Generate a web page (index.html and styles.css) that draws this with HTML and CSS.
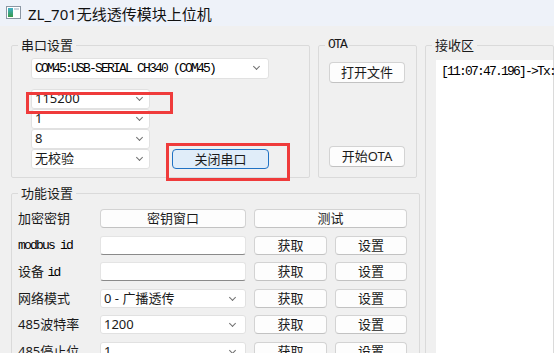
FILE: index.html
```html
<!DOCTYPE html>
<html lang="zh-CN">
<head>
  <meta charset="UTF-8">
  <title>ZL_701无线透传模块上位机</title>
  <link rel="stylesheet" href="styles.css">
</head>
<body>
  <div class="titlebar">
    <svg class="appicon" width="15" height="13" viewBox="0 0 15 13">
      <defs>
        <linearGradient id="g" x1="0" y1="0" x2="0" y2="1">
          <stop offset="0" stop-color="#3fb0c8"/>
          <stop offset="1" stop-color="#3a9a4a"/>
        </linearGradient>
      </defs>
      <rect x="0.5" y="0.5" width="14" height="12" fill="#fff" stroke="#8a96a3"/>
      <rect x="2" y="2" width="5" height="9" fill="url(#g)"/>
      <rect x="8" y="2" width="5" height="2" fill="#c9d3dd"/>
    </svg>
    <span class="title">ZL_701无线透传模块上位机</span>
  </div>

  <div class="main">
    <div class="left">
      <div class="toprow">
        <fieldset class="group serial">
          <legend>串口设置</legend>
          <div class="combo port mono">COM45:USB-SERIAL CH340 (COM45)</div>
          <div class="serial-body">
            <div class="stack">
              <div class="combo">115200</div>
              <div class="combo">1</div>
              <div class="combo">8</div>
              <div class="combo">无校验</div>
            </div>
            <button class="btn primary">关闭串口</button>
          </div>
        </fieldset>
        <fieldset class="group ota">
          <legend class="mono">OTA</legend>
          <button class="btn">打开文件</button>
          <button class="btn">开始OTA</button>
        </fieldset>
      </div>

      <fieldset class="group func">
        <legend>功能设置</legend>
        <div class="grid">
          <span class="label">加密密钥</span>
          <button class="btn">密钥窗口</button>
          <button class="btn wide">测试</button>

          <span class="label mono">modbus id</span>
          <div class="edit"></div>
          <button class="btn">获取</button>
          <button class="btn">设置</button>

          <span class="label">设备 <span class="mono">id</span></span>
          <div class="edit"></div>
          <button class="btn">获取</button>
          <button class="btn">设置</button>

          <span class="label">网络模式</span>
          <div class="combo">0 - 广播透传</div>
          <button class="btn">获取</button>
          <button class="btn">设置</button>

          <span class="label">485波特率</span>
          <div class="combo">1200</div>
          <button class="btn">获取</button>
          <button class="btn">设置</button>

          <span class="label">485停止位</span>
          <div class="combo">1</div>
          <button class="btn">获取</button>
          <button class="btn">设置</button>
        </div>
      </fieldset>
    </div>

    <fieldset class="group recv">
      <legend>接收区</legend>
      <div class="log mono">[11:07:47.196]-&gt;Tx:</div>
    </fieldset>
  </div>

  <div class="mark mark-baud"></div>
  <div class="mark mark-close"></div>
</body>
</html>
```

FILE: styles.css
```css
html, body {
  margin: 0;
  height: 100%;
  overflow: hidden;
}
body {
  position: relative;
  background: #f0f0f0;
  color: #1a1a1a;
  font-family: "Noto Sans", "Noto Sans CJK SC", sans-serif;
  font-size: 13px;
}
.mono {
  font-family: "Liberation Mono", "Noto Sans CJK SC", monospace;
  font-size: 13px;
  letter-spacing: -1.8px;
  color: #000;
}

.titlebar {
  height: 26px;
  background: #eef2f9;
  display: flex;
  align-items: center;
  padding-left: 6px;
}
.appicon { margin-right: 7px; margin-top: -1px; }
.title {
  font-family: "Noto Sans", "Noto Sans CJK SC", sans-serif;
  font-size: 15px;
  color: #111;
}

.main {
  display: flex;
  gap: 5px;
  padding: 10px 0 0 11px;
}
.left { width: 409px; flex: none; }
.toprow { display: flex; gap: 8px; }

.group {
  box-sizing: border-box;
  margin: 0;
  min-width: 0;
  border: 1px solid #dadada;
  border-radius: 2px;
  padding: 0;
}
.group legend {
  padding: 0 3px;
  line-height: 18px;
  font-size: 13px;
  color: #1a1a1a;
}

.serial {
  width: 299px;
  padding: 4px 0 8px 19px;
}
.serial legend { margin-left: -13px; }
.serial-body { display: flex; margin-top: 10px; }
.stack { width: 119px; display: flex; flex-direction: column; }
.stack .combo { height: 20px; }

.ota {
  width: 99px;
  padding: 8px 0 10px 10px;
  display: flex;
  flex-direction: column;
  justify-content: space-between;
}
.ota legend { margin-left: -4px; }
.ota .btn { width: 76px; height: 21px; }

.combo {
  box-sizing: border-box;
  position: relative;
  background: #fff;
  border: 1px solid #e1e1e1;
  border-radius: 3px;
  height: 19px;
  line-height: 17px;
  padding-left: 3px;
  font-size: 13px;
  white-space: nowrap;
}
.combo::after {
  content: "";
  position: absolute;
  right: 9px;
  top: 4px;
  width: 4px;
  height: 4px;
  border-right: 1px solid #707070;
  border-bottom: 1px solid #707070;
  transform: rotate(45deg);
}
.combo.port {
  width: 238px;
  height: 21px;
  line-height: 19px;
}
.combo.port::after { top: 5px; }
.stack .combo::after { right: 7px; top: 5px; }

.btn {
  box-sizing: border-box;
  background: #fdfdfd;
  border: 1px solid #d3d3d3;
  border-bottom-color: #c2c2c2;
  border-radius: 4px;
  font-family: "Noto Sans", "Noto Sans CJK SC", sans-serif;
  font-size: 13px;
  color: #1a1a1a;
  padding: 0;
  line-height: 1;
}
.btn.primary {
  background: #e0edf9;
  border-color: #1f72c4;
  width: 97px;
  height: 20px;
  margin-left: 22px;
  align-self: flex-end;
}

.func {
  margin-top: 6px;
  width: 409px;
  padding: 7px 0 30px 6px;
}
.func legend { margin-left: 0; }
.grid {
  display: grid;
  grid-template-columns: 74px 146px 73px 72px;
  grid-auto-rows: 19px;
  column-gap: 8px;
  row-gap: 7.6px;
}
.label {
  line-height: 19px;
  white-space: nowrap;
}
.wide { grid-column: span 2; }
.edit {
  box-sizing: border-box;
  background: #fff;
  border: 1px solid #e4e4e4;
  border-bottom: 1px solid #8a8a8a;
  border-radius: 3px;
}
.func .combo::after { right: 10px; top: 5px; }

.recv {
  width: 200px;
  height: 400px;
  padding: 6px 0 0 10px;
}
.recv legend { margin-left: -4px; }
.log {
  background: #fff;
  height: 100%;
  padding: 4px 0 0 5px;
  line-height: 16px;
  white-space: nowrap;
}

.mark {
  position: absolute;
  border: 3px solid #ef3b3b;
  box-sizing: border-box;
}
.mark-baud { left: 26px; top: 92px; width: 147px; height: 22px; }
.mark-close { left: 166px; top: 143px; width: 124px; height: 38px; }
```
